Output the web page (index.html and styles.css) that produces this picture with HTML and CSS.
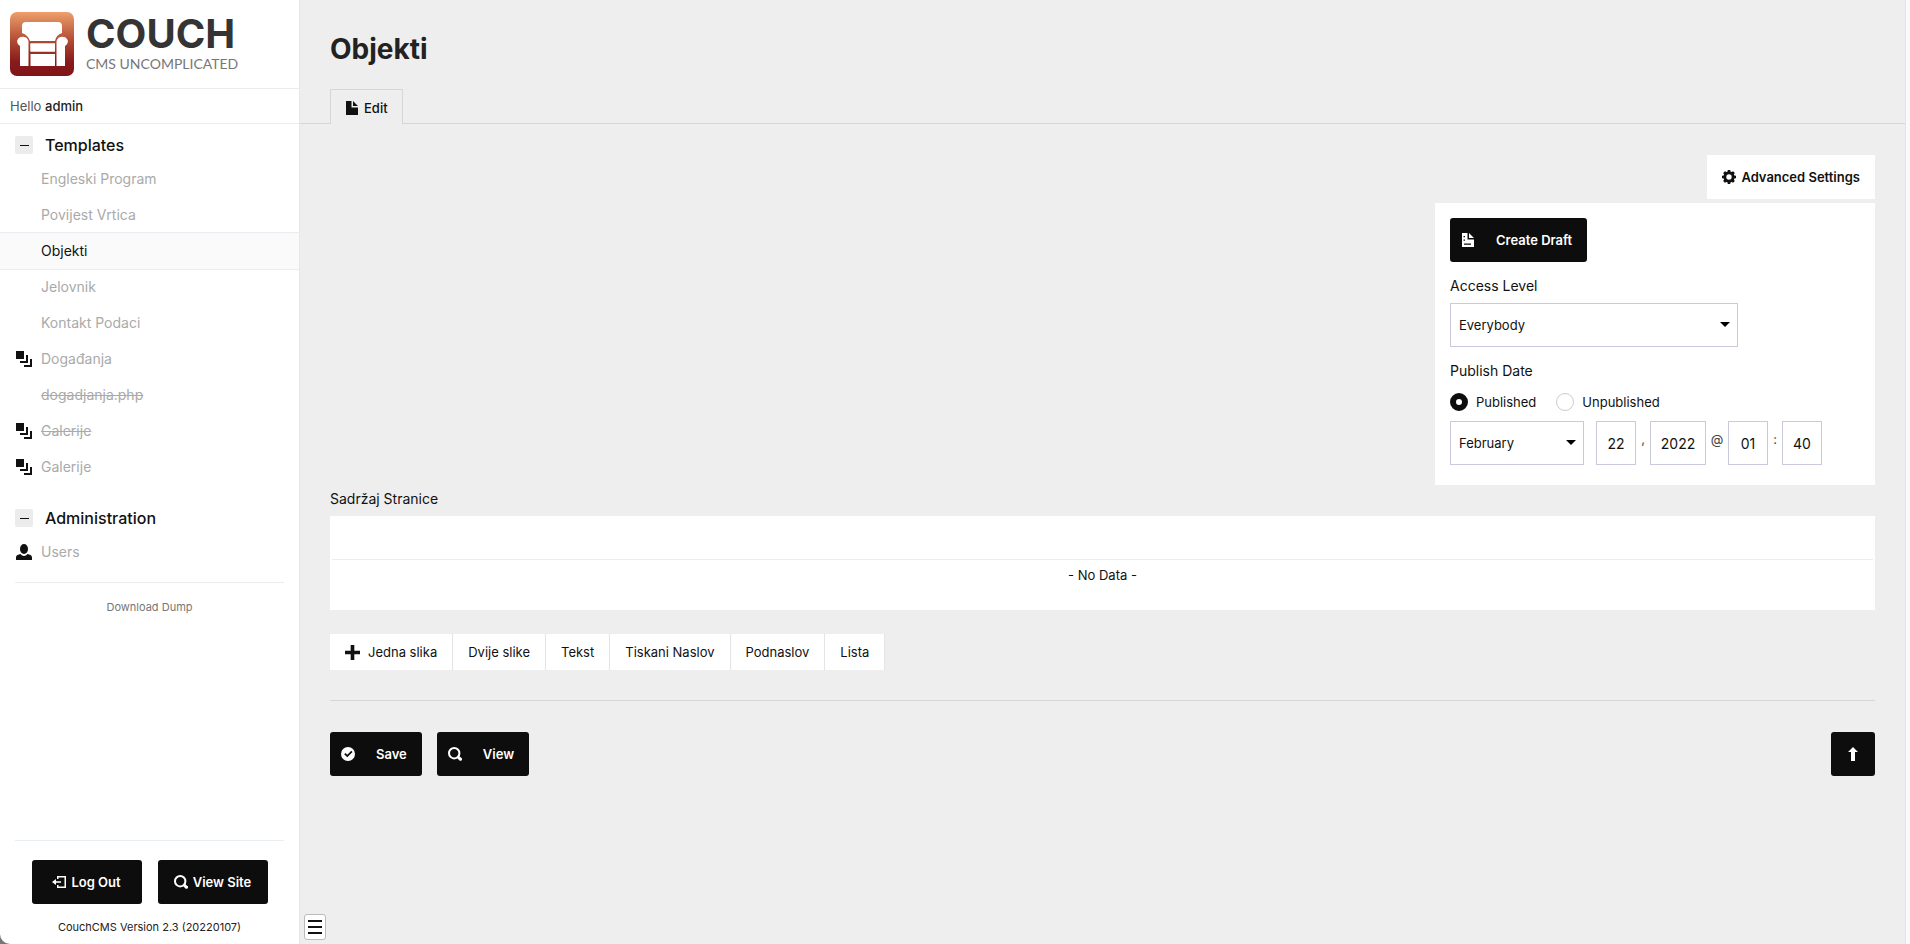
FILE: index.html
```html
<!DOCTYPE html>
<html lang="hr">
<head>
<meta charset="utf-8">
<title>Objekti</title>
<link rel="stylesheet" href="styles.css">
</head>
<body>
<svg class="defs" aria-hidden="true">
  <symbol id="i-stack" viewBox="0 0 16 16"><path d="M0 0h8v8H0zM10 4h2v8H4v-2h6zM14 8h2v8H8v-2h6z"/></symbol>
  <symbol id="i-user" viewBox="0 0 16 16"><ellipse cx="8" cy="5" rx="4" ry="5"/><path d="M0 16v-2.500C0 11 2.500 10.500 4.500 10c1 1.300 2 2 3.500 2s2.500-.7 3.500-2c2 .5 4.500 1 4.500 3.500V16z"/></symbol>
  <symbol id="i-file" viewBox="0 0 14 14"><path d="M1 0h5.500v6.500H13V14H1zM8 0l5 5H8z"/></symbol>
  <symbol id="i-draft" viewBox="0 0 14 14"><path fill-rule="evenodd" d="M1 0h5.500v6.500H13V14H1zM8 0l5 5H8zM2.500 3v1.300h1.500V3zM2.500 6.500v1.300h1.500V6.500zM3 10.500v1.300h7v-1.300z"/></symbol>
  <symbol id="i-search" viewBox="0 0 14 14"><circle cx="6.200" cy="6.200" r="5.200" fill="none" stroke="currentColor" stroke-width="2"/><path d="M9 11l2-2 2.500 2a1.500 1.500 0 0 1-2 2.400z"/></symbol>
  <symbol id="i-exit" viewBox="0 0 14 14"><path d="M5 1h9v12H5v-3h1.500v1.500h6v-9h-6V4H5zM0 7l4-3v2.200h5v1.600H4V10z"/></symbol>
  <symbol id="i-gear" viewBox="0 0 14 14"><path fill-rule="evenodd" d="M5.800 0h2.400l.4 1.700 1 .4 1.500-.9 1.700 1.700-.9 1.500.4 1 1.700.4v2.400l-1.700.4-.4 1 .9 1.500-1.700 1.700-1.500-.9-1 .4-.4 1.700H5.800l-.4-1.700-1-.4-1.500.9-1.700-1.700.9-1.500-.4-1L0 8.200V5.800l1.700-.4.4-1-.9-1.500 1.700-1.700 1.500.9 1-.4zM7 4.300a2.700 2.700 0 1 0 0 5.400 2.700 2.700 0 0 0 0-5.400z"/></symbol>
  <symbol id="i-plus" viewBox="0 0 14 14"><path d="M5.300 0h3.400v5.300H14v3.400H8.700V14H5.300V8.700H0V5.300h5.300z"/></symbol>
  <symbol id="i-check" viewBox="0 0 14 14"><path fill-rule="evenodd" d="M7 0a7 7 0 1 0 0 14A7 7 0 0 0 7 0zM3.200 7.300l1.300-1.200L6.300 7.700l4-4 1.200 1.200L6.300 10.200z"/></symbol>
  <symbol id="i-up" viewBox="0 0 14 14"><path d="M7 0l5 5H9v9H5V5H2z"/></symbol>
</svg>
<div class="app">
  <aside class="sidebar">
    <a class="logo" href="#">
      <svg class="logo-mark" viewBox="0 0 64 64" aria-hidden="true">
        <defs><linearGradient id="lg" x1="0" y1="0" x2="0" y2="1"><stop offset="0" stop-color="#ee9f6b"/><stop offset=".45" stop-color="#b04a33"/><stop offset=".78" stop-color="#881a1c"/><stop offset="1" stop-color="#7f1518"/></linearGradient></defs>
        <rect width="64" height="64" rx="7" fill="url(#lg)"/>
        <g fill="#fff">
          <path d="M16 10h32q4 0 4 4v7q-6 2-7 8H20q-2-6-8-8v-7q0-4 4-4z"/>
          <path d="M10 54V34q-3-2-3-5a6 6 0 0 1 11.500 0v25zM55 54V34q3-2 3-5a6 6 0 0 0-11.500 0v25z"/>
          <path d="M20.500 31.500h24.500v8H20.500zM20.500 42h24.500v12H20.500z"/>
          <path d="M20.500 31.500h24.500v8H20.500z"/>
        </g>
      </svg>
      <span class="logo-text"><b>COUCH</b><small>CMS UNCOMPLICATED</small></span>
    </a>
    <p class="hello">Hello <a href="#">admin</a></p>
    <nav class="nav">
      <h2><button class="fold" aria-label="Collapse Templates"></button>Templates</h2>
      <ul>
        <li><a href="#">Engleski Program</a></li>
        <li><a href="#">Povijest Vrtica</a></li>
        <li><a class="active" href="#">Objekti</a></li>
        <li><a href="#">Jelovnik</a></li>
        <li><a href="#">Kontakt Podaci</a></li>
        <li><a href="#"><svg><use href="#i-stack"/></svg>Događanja</a></li>
        <li><a href="#"><s>dogadjanja.php</s></a></li>
        <li><a href="#"><svg><use href="#i-stack"/></svg><s>Galerije</s></a></li>
        <li><a href="#"><svg><use href="#i-stack"/></svg>Galerije</a></li>
      </ul>
      <h2><button class="fold" aria-label="Collapse Administration"></button>Administration</h2>
      <ul>
        <li><a href="#"><svg><use href="#i-user"/></svg>Users</a></li>
      </ul>
    </nav>
    <a class="dump" href="#">Download Dump</a>
    <footer class="foot">
      <div class="foot-buttons">
        <a class="btn compact" href="#"><svg><use href="#i-exit"/></svg>Log Out</a>
        <a class="btn compact" href="#"><svg><use href="#i-search"/></svg>View Site</a>
      </div>
      <a class="version" href="#">CouchCMS Version 2.3 (20220107)</a>
    </footer>
  </aside>
  <main class="main">
    <h1>Objekti</h1>
    <div class="tabs"><a class="tab" href="#"><svg><use href="#i-file"/></svg>Edit</a></div>
    <form class="content">
      <button type="button" class="advanced"><svg><use href="#i-gear"/></svg>Advanced Settings</button>
      <section class="panel">
        <button type="button" class="btn"><svg><use href="#i-draft"/></svg><span>Create Draft</span></button>
        <label class="label" for="access">Access Level</label>
        <div class="select wide"><select id="access"><option>Everybody</option></select></div>
        <div class="label">Publish Date</div>
        <div class="radios">
          <label><input type="radio" name="pub" checked>Published</label>
          <label><input type="radio" name="pub">Unpublished</label>
        </div>
        <div class="date">
          <div class="select month"><select aria-label="Month"><option>February</option></select></div>
          <input type="text" value="22" aria-label="Day"><span class="sep">,</span>
          <input type="text" class="year" value="2022" aria-label="Year"><span class="sep at">@</span>
          <input type="text" value="01" aria-label="Hour"><span class="sep">:</span>
          <input type="text" value="40" aria-label="Minute">
        </div>
      </section>
      <div class="label field">Sadržaj Stranice</div>
      <table class="grid">
        <thead><tr><th></th></tr></thead>
        <tbody><tr><td>- No Data -</td></tr></tbody>
      </table>
      <div class="adders">
        <button type="button"><svg><use href="#i-plus"/></svg>Jedna slika</button>
        <button type="button">Dvije slike</button>
        <button type="button">Tekst</button>
        <button type="button">Tiskani Naslov</button>
        <button type="button">Podnaslov</button>
        <button type="button">Lista</button>
      </div>
      <div class="actions">
        <button type="button" class="btn"><svg><use href="#i-check"/></svg><span>Save</span></button>
        <a class="btn" href="#"><svg><use href="#i-search"/></svg><span>View</span></a>
        <a class="btn top" href="#" aria-label="Back to top"><svg><use href="#i-up"/></svg></a>
      </div>
    </form>
    <button class="menu" aria-label="Toggle sidebar"><i></i><i></i><i></i></button>
  </main>
</div>
</body>
</html>
```
FILE: styles.css
```css
* { box-sizing: border-box; }
body { margin: 0; background: #777; color: #111; font: 13px/20px Inter, "Liberation Sans", sans-serif; }
a { color: inherit; text-decoration: none; }
button, input, select { font: inherit; color: inherit; }
button { cursor: pointer; }
h1, h2, p, ul { margin: 0; padding: 0; }
svg { width: 14px; height: 14px; fill: currentColor; flex: none; }
.defs { display: none; }

.app { display: flex; min-height: 100vh; }
.sidebar { width: 300px; flex: none; display: flex; flex-direction: column; background: #fff; border-right: 1px solid #e8e8e8; border-bottom-left-radius: 10px; }
.logo { display: flex; gap: 12px; padding: 12px 10px; height: 89px; border-bottom: 1px solid #ececec; }
.logo-mark { width: 64px; height: 64px; }
.logo-text { display: flex; flex-direction: column; padding-top: 2px; white-space: nowrap; }
.logo-text b { font-size: 40px; line-height: 40px; font-weight: 700; color: #343434; }
.logo-text small { font: 14px/20px Lato, sans-serif; color: #777; }
.hello { padding: 7px 10px; border-bottom: 1px solid #ececec; color: #555; }
.hello a { color: #222; font-weight: 500; }

.nav h2 { display: flex; align-items: center; gap: 12px; padding: 10px 15px 5px; font-size: 16px; line-height: 22px; font-weight: 500; }
.fold { display: grid; place-items: center; width: 18px; height: 18px; padding: 0; border: 0; border-radius: 2px; background: #ececec; }
.fold::before { content: ""; width: 9px; height: 1px; background: #111; }
.nav ul { list-style: none; margin-bottom: 12px; }
.nav li a { position: relative; display: flex; align-items: center; height: 36px; padding-left: 41px; font-size: 14px; color: #aaa; }
.nav li svg { position: absolute; left: 16px; width: 16px; height: 16px; color: #111; }
.nav li .active { height: 38px; margin: -1px 0; background: #fafafa; border: solid #e9ecf0; border-width: 1px 0; color: #111; }
.dump { margin: 0 15px; padding-top: 14px; border-top: 1px solid #ececec; text-align: center; font-size: 11px; color: #777; }
.foot { margin: auto 15px 0; padding: 19px 0 7px; border-top: 1px solid #e9eef2; text-align: center; }
.foot-buttons { display: flex; justify-content: center; gap: 16px; margin-bottom: 12px; }
.version { font-size: 11px; color: #222; }

.btn { display: inline-flex; align-items: center; height: 44px; padding: 0 15px 0 11px; border: 0; border-radius: 3px; background: #0d0d0d; color: #fff; font-size: 13px; font-weight: 600; }
.btn span { margin-left: 21px; }
.compact { padding: 0 15px; gap: 5px; min-width: 110px; justify-content: center; }

.main { position: relative; flex: 1; min-width: 0; padding-right: 1px; background: #eee; border-right: 4px solid #fafafa; box-shadow: inset -1px 0 #e4e4e4; }
h1 { padding: 32px 30px 23px; font-size: 28px; line-height: 34px; font-weight: 700; color: #222; }
.tabs { display: flex; padding: 0 30px; border-bottom: 1px solid #d6d6d6; }
.tab { display: flex; align-items: center; gap: 5px; height: 35px; margin-bottom: -1px; padding: 2px 14px 0; border: 1px solid #d6d6d6; border-bottom: 0; background: #eee; font-weight: 500; }
.content { padding: 31px 30px 30px; display: flex; flex-direction: column; }
.advanced { align-self: flex-end; display: flex; align-items: center; gap: 5px; height: 44px; padding: 0 15px; border: 0; background: #fff; font-weight: 600; }
.panel { align-self: flex-end; width: 440px; margin-top: 4px; padding: 15px 15px 20px; background: #fff; }
.label { display: block; margin: 14px 0 7px; font-size: 14px; }
.panel .btn { display: flex; }
.select { position: relative; }
.select select { display: block; width: 100%; height: 44px; padding: 0 8px; appearance: none; border: 1px solid #c9cbdc; border-radius: 0; background: #fff; }
.select::after { content: ""; position: absolute; right: 8px; top: 19px; border: 5px solid transparent; border-top-color: #000; border-bottom: 0; }
.wide { width: 288px; }
.radios { display: flex; gap: 20px; margin: 11px 0 9px; }
.radios label { display: flex; align-items: center; gap: 8px; }
.radios input { appearance: none; width: 18px; height: 18px; margin: 0; border: 1px solid #ccc; border-radius: 50%; background: #fff; }
.radios input:checked { border: 6px solid #0d0d0d; }
.date { display: flex; }
.month { width: 134px; margin-right: 12px; }
.date input { width: 40px; height: 44px; padding: 0; border: 1px solid #c9cbdc; text-align: center; font-size: 14px; }
.date .year { width: 56px; }
.sep { width: 14px; padding-top: 8px; text-align: center; color: #444; }
.at { width: 22px; }
.field { margin: 4px 0 7px; }
.grid { width: 100%; background: #fff; border: 2px solid #fff; border-collapse: separate; border-spacing: 0; }
.grid th { height: 42px; border-bottom: 1px solid #ededed; }
.grid td { height: 48px; padding: 0 0 18px; text-align: center; }
.adders { display: flex; margin-top: 24px; }
.adders button { display: flex; align-items: center; gap: 8px; height: 36px; padding: 0 15px; border: 0; border-right: 1px solid #e4e4e4; background: #fff; }
.adders svg { width: 15px; height: 15px; }
.actions { display: flex; gap: 15px; margin-top: 30px; padding-top: 31px; border-top: 1px solid #d6d6d6; }
.actions .top { width: 44px; margin-left: auto; padding: 0; justify-content: center; }
.menu { position: absolute; left: 4px; bottom: 4px; display: grid; align-content: center; gap: 4px; width: 22px; height: 26px; padding: 0 3px; border: 1px solid #bbb; border-radius: 3px; background: #fff; }
.menu i { height: 2px; background: #111; }
```
